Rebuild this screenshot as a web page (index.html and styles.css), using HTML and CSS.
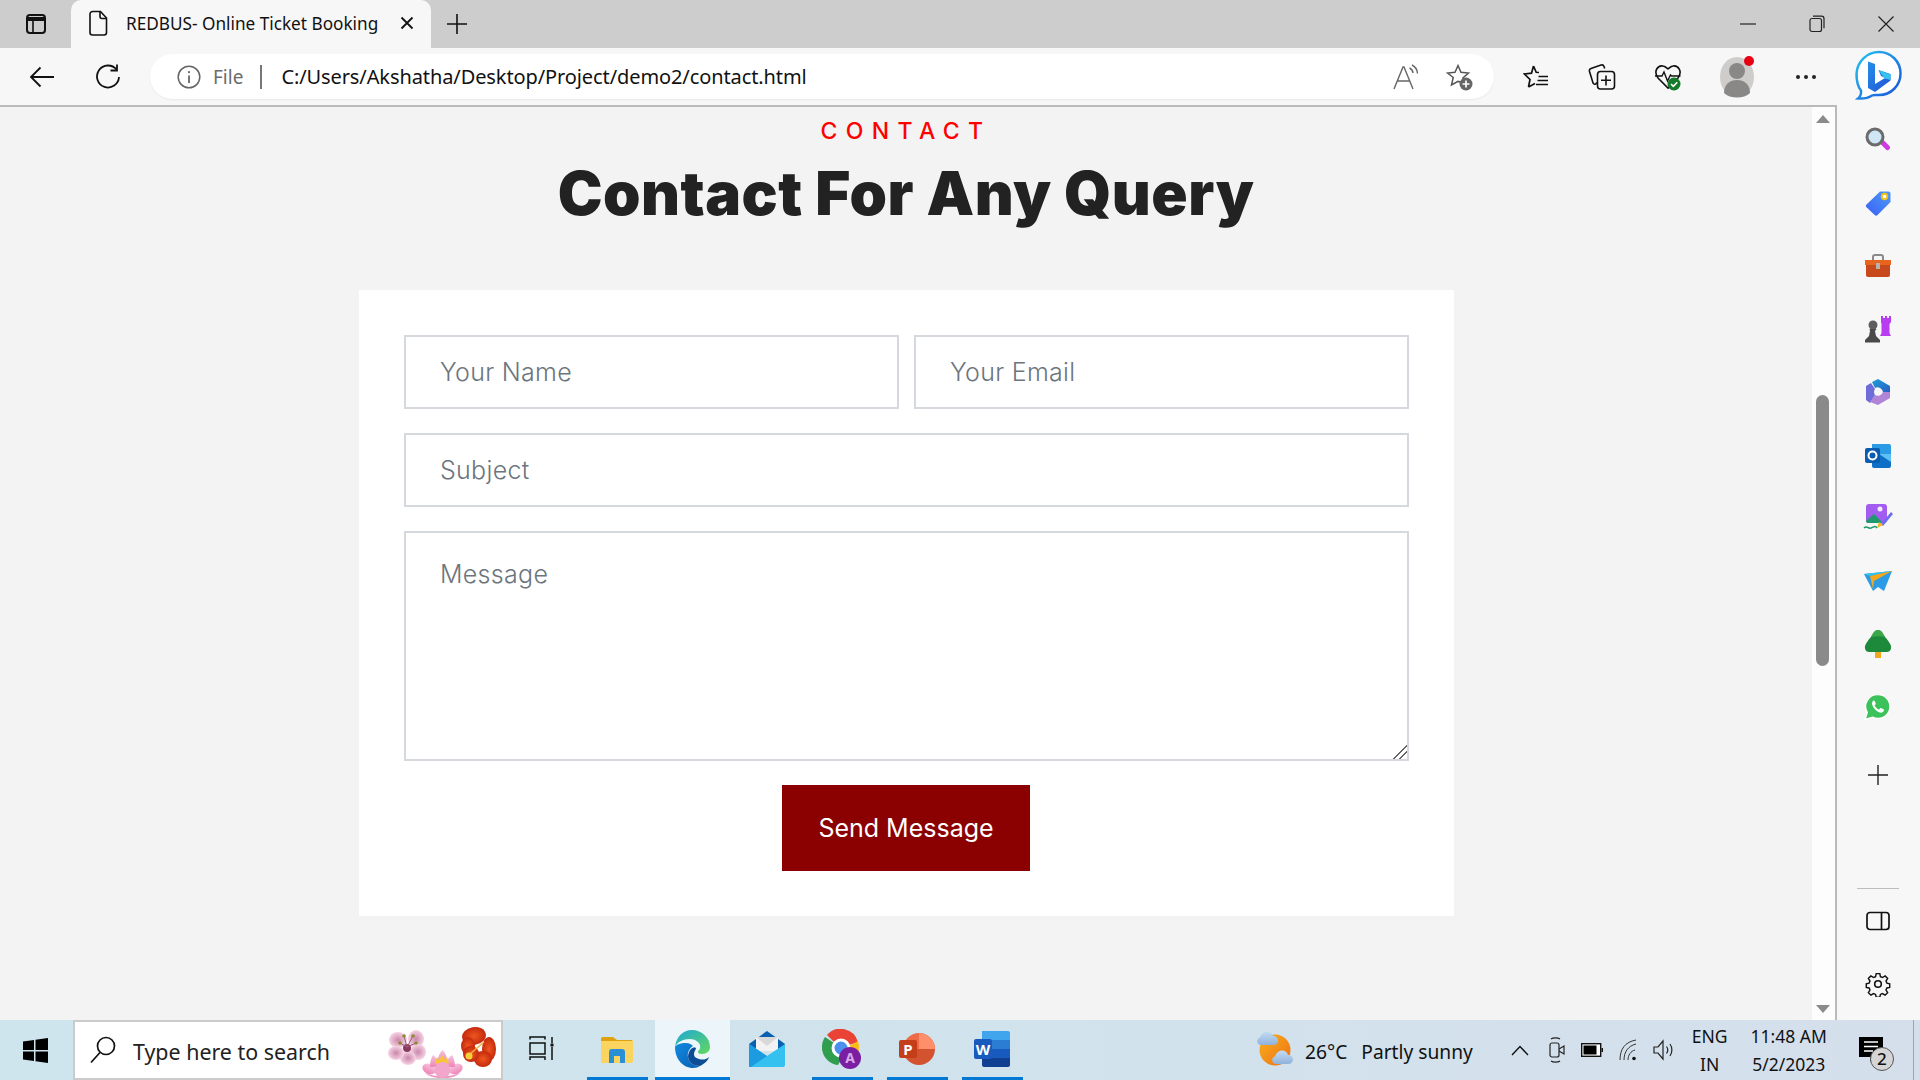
FILE: index.html
```html
<!DOCTYPE html>
<html lang="en">
<head>
    <meta charset="UTF-8">
    <meta name="viewport" content="width=device-width, initial-scale=1.0">
    <title>REDBUS- Online Ticket Booking</title>
    <link rel="stylesheet" href="styles.css">
</head>
<body>
    <div class="tabstrip">
        <div class="strip-btn">
            <svg width="24" height="24" viewBox="0 0 24 24" fill="none" stroke="#111" stroke-width="2"><rect x="3" y="3" width="18" height="18" rx="3"/><path d="M3 7h18" stroke-width="4"/><path d="M9 8v13" stroke-width="1.6"/></svg>
        </div>
        <div class="tab">
            <svg class="tab-doc" width="20" height="26" viewBox="0 0 20 26" fill="none" stroke="#111" stroke-width="1.6"><path d="M3.5 1.5h8l6 6.5v14.500a2.500 2.500 0 0 1-2.500 2.500h-11.500a2.500 2.500 0 0 1-2.500-2.500v-18.500a2.500 2.500 0 0 1 2.500-2.500z"/><path d="M11 1.500v5a2 2 0 0 0 2 2h4.500"/></svg>
            <span class="tab-title">REDBUS- Online Ticket Booking</span>
            <svg class="tab-close" width="14" height="14" viewBox="0 0 14 14" stroke="#111" stroke-width="1.800"><path d="M1.500 1.500l11 11M12.500 1.500l-11 11"/></svg>
        </div>
        <div class="strip-btn strip-plus">
            <svg width="22" height="22" viewBox="0 0 22 22" stroke="#111" stroke-width="1.600"><path d="M11 1v20M1 11h20"/></svg>
        </div>
        <div class="window-btns">
            <div class="window-btn"><svg width="16" height="16" viewBox="0 0 16 16" stroke="#222" stroke-width="1.200"><path d="M0 8h16"/></svg></div>
            <div class="window-btn"><svg width="16" height="18" viewBox="0 0 16 18" fill="none" stroke="#222" stroke-width="1.200"><rect x="1" y="3.500" width="11.500" height="13" rx="2"/><path d="M4 1.200h8.500a2.500 2.500 0 0 1 2.500 2.500v9.500"/></svg></div>
            <div class="window-btn"><svg width="16" height="16" viewBox="0 0 16 16" stroke="#222" stroke-width="1.200"><path d="M.5.500l15 15M15.500.500l-15 15"/></svg></div>
        </div>
    </div>

    <div class="toolbar">
        <div class="nav-btn">
            <svg width="26" height="22" viewBox="0 0 26 22" fill="none" stroke="#111" stroke-width="1.800"><path d="M25 11H2M11.500 1.500L2 11l9.500 9.500"/></svg>
        </div>
        <div class="nav-btn">
            <svg width="26" height="26" viewBox="0 0 26 26" fill="none" stroke="#111" stroke-width="1.800"><path d="M21.500 5.500A11 11 0 1 0 24 13"/><path d="M22 .5v6h-6.500"/></svg>
        </div>
        <div class="address">
            <svg width="24" height="24" viewBox="0 0 24 24" fill="none" stroke="#666" stroke-width="1.500"><circle cx="12" cy="12" r="10.800"/><path d="M12 10.500v7.500" stroke-width="1.800"/><circle cx="12" cy="7.200" r="1.100" fill="#666" stroke="none"/></svg>
            <span class="file-label">File</span>
            <span class="address-sep"></span>
            <span class="url">C:/Users/Akshatha/Desktop/Project/demo2/contact.html</span>
            <div class="address-end">
                <svg width="28" height="28" viewBox="0 0 28 28" fill="none" stroke="#666" stroke-width="1.400"><path d="M2 26L11 4h1l9 22M5.500 18h12.500"/><path d="M17.500 5a6 6 0 0 1 3.500 5M20 2a10 10 0 0 1 5.500 8.500"/></svg>
                <svg width="28" height="28" viewBox="0 0 28 28"><path d="M12 2.500l3 6.800 7.500.7-5.600 5 1.600 5-6.500-1.600-6.500 3.600 1.700-7.500L1.500 10l7.500-.7z" fill="none" stroke="#555" stroke-width="1.500"/><circle cx="20" cy="21" r="6.500" fill="#666"/><path d="M20 17.500v7M16.500 21h7" stroke="#fff" stroke-width="1.700"/></svg>
            </div>
        </div>
        <div class="tool-btn">
            <svg width="26" height="26" viewBox="0 0 26 26" fill="none" stroke="#111" stroke-width="1.700"><path d="M10.500 2l2.700 6.300 2.800.2M5.500 23l1.500-7.500L1.500 10l7-.8L10.500 2M5.500 23l6.500-3.500"/><path d="M15.500 12.500h9.500M14.500 16.500h10.500M13 20.500h12"/></svg>
        </div>
        <div class="tool-btn">
            <svg width="28" height="28" viewBox="0 0 28 28" fill="none" stroke="#111" stroke-width="1.600"><path d="M9 19.500l-1.300 1.500a2 2 0 0 1-2.600-.8L1.500 8.500a2.500 2.500 0 0 1 1.500-3l10-3.500c1.300-.4 2.600.3 3 1.500l.7 2"/><rect x="9.500" y="8.500" width="17" height="17.500" rx="3"/><path d="M18 12.500v10M13 17.300h10"/></svg>
        </div>
        <div class="tool-btn">
            <svg width="28" height="28" viewBox="0 0 28 28"><path d="M4 15C-1 8 4 2 9 3c3 .4 4.500 3 5 3 .5 0 2-2.600 5-3 5-.8 10 5 5 12L14 25z" fill="none" stroke="#111" stroke-width="1.600"/><path d="M1 13h7l2-4 3.500 9 3-6 1 1h9" fill="none" stroke="#111" stroke-width="1.400"/><circle cx="20" cy="21" r="6.500" fill="#157a2a"/><path d="M17 21l2.300 2.300 4-4" fill="none" stroke="#fff" stroke-width="1.600"/></svg>
        </div>
        <div class="tool-btn tool-gap">
            <svg width="36" height="42" viewBox="0 0 36 42"><ellipse cx="18" cy="21" rx="17" ry="20" fill="#cfcdcb"/><circle cx="18" cy="15" r="8" fill="#8a8886"/><path d="M5 37c0-9 6-13 13-13s13 4 13 13c-3 3-8 4.500-13 4.500S8 40 5 37z" fill="#8a8886"/></svg>
            <span class="profile-dot"></span>
        </div>
        <div class="tool-btn tool-gap">
            <svg width="22" height="6" viewBox="0 0 22 6" fill="#222"><circle cx="3" cy="3" r="2"/><circle cx="11" cy="3" r="2"/><circle cx="19" cy="3" r="2"/></svg>
        </div>
        <div class="tool-btn tool-bing">
            <svg width="48" height="54" viewBox="0 0 48 54">
                <defs>
                    <linearGradient id="bingEdge" x1="0" y1="0" x2="1" y2="1"><stop offset="0" stop-color="#27c4f0"/><stop offset="1" stop-color="#1a4fd8"/></linearGradient>
                    <linearGradient id="bingB" x1="0" y1="0" x2="1" y2="1"><stop offset="0" stop-color="#2490e8"/><stop offset="1" stop-color="#2250d6"/></linearGradient>
                </defs>
                <path d="M25 2c12 0 21.500 9.500 21.500 21.500S37 45 25 45c-3 0-5-.5-7 .5-3 2-8 3.500-14 3 2.500-2 3.500-4 3-8C4 37 2.500 30 2.500 24 3 11.500 13 2 25 2z" fill="#fff" stroke="url(#bingEdge)" stroke-width="2.500"/>
                <path d="M14 11.500l7 2.500v20l10-6-4-2-2.500-6 12 4v6.500L21 42l-7-4z" fill="url(#bingB)"/>
                <path d="M24.500 20l12 4.500v5.500l-6-1.500z" fill="#35c3ee"/>
            </svg>
        </div>
    </div>

    <div class="browser-body">
        <main class="page">
            <h5 class="eyebrow">CONTACT</h5>
            <h1 class="page-title">Contact For Any Query</h1>
            <form class="contact-card">
                <div class="form-row">
                    <input class="field" type="text" placeholder="Your Name">
                    <input class="field" type="email" placeholder="Your Email">
                </div>
                <input class="field" type="text" placeholder="Subject">
                <textarea class="field field-message" placeholder="Message"></textarea>
                <button class="send-btn" type="button">Send Message</button>
            </form>
        </main>

        <div class="scrollbar">
            <span class="arrow arrow-up"></span>
            <span class="thumb"></span>
            <span class="arrow arrow-down"></span>
        </div>

        <aside class="sidebar">
            <div class="side-btn">
                <svg width="26" height="26" viewBox="0 0 26 26"><rect x="15" y="15.500" width="11" height="5" rx="2.500" transform="rotate(45 20 18)" fill="#cf3ae0"/><circle cx="10" cy="10" r="8" fill="#cfe6f5" stroke="#6b6b6b" stroke-width="3"/></svg>
            </div>
            <div class="side-btn">
                <svg width="26" height="26" viewBox="0 0 26 26"><defs><linearGradient id="tagFill" x1="0" y1="1" x2="1" y2="0"><stop offset="0" stop-color="#3a60f5"/><stop offset="1" stop-color="#4d9bf7"/></linearGradient></defs><path d="M1.500 14.500L15 1.500h8.500a2 2 0 0 1 2 2V12L12.500 25a2 2 0 0 1-2.800 0l-8.200-7.700a2 2 0 0 1 0-2.800z" fill="url(#tagFill)"/><circle cx="19.500" cy="6.500" r="2.700" fill="#fff" stroke="#f2c21a" stroke-width="2"/></svg>
            </div>
            <div class="side-btn">
                <svg width="28" height="24" viewBox="0 0 28 24"><path d="M9 6V3a2 2 0 0 1 2-2h6a2 2 0 0 1 2 2v3" fill="none" stroke="#8a8a8a" stroke-width="2"/><path d="M1 6h26v5H1z" fill="#e8641f"/><path d="M2 11h24v10a2 2 0 0 1-2 2H4a2 2 0 0 1-2-2z" fill="#c64a1b"/><rect x="12" y="9" width="4" height="6" fill="#b9b1ab"/></svg>
            </div>
            <div class="side-btn">
                <svg width="28" height="28" viewBox="0 0 28 28"><path d="M17 1h2v2h2V1h2v2h2V1h2v6l-1.500 2v9l1.500 3h-11l1.500-3V9L17 7z" fill="#b83cf0"/><circle cx="9" cy="10" r="4.500" fill="#5e5e5e"/><path d="M5.500 14h7l-1.500 2 1 5 4 4v2.500H1V25l4-4 1-5z" fill="#4a4a4a"/></svg>
            </div>
            <div class="side-btn">
                <svg width="26" height="28" viewBox="0 0 26 28"><defs><linearGradient id="msBlue" x1="0" y1="0" x2="1" y2="1"><stop offset="0" stop-color="#1aa0d8"/><stop offset="1" stop-color="#2d5ec6"/></linearGradient></defs><path d="M13 1l12 7v6h-7a5.500 5.500 0 0 0-8-4L7 4z" fill="url(#msBlue)"/><path d="M1 8l5-3 4 6a5.500 5.500 0 0 0 0 6l-5 8-4-3z" fill="#6d6cd8"/><path d="M25 14v6l-12 7-8-3 5-7a5.500 5.500 0 0 0 8-3z" fill="#b084d6"/></svg>
            </div>
            <div class="side-btn">
                <svg width="26" height="26" viewBox="0 0 26 26"><path d="M7 2h17a2 2 0 0 1 2 2v8H7z" fill="#2b9be6"/><path d="M7 12l19 0v12a2 2 0 0 1-2 2H9a2 2 0 0 1-2-2z" fill="#0f6fc6"/><path d="M14 12l12 8v-8z" fill="#5cc0f2"/><rect x="0" y="6" width="15" height="15" rx="2" fill="#0a5cb0"/><circle cx="7.500" cy="13.500" r="4" fill="none" stroke="#fff" stroke-width="2"/></svg>
            </div>
            <div class="side-btn">
                <svg width="30" height="28" viewBox="0 0 30 28"><rect x="3" y="0" width="21" height="19" rx="3" fill="#a35cf0"/><circle cx="17" cy="5" r="2.500" fill="#f4e9ff"/><path d="M3 17l8-7 7 7v2H5a2 2 0 0 1-2-2z" fill="#1f9a6c"/><path d="M18 20L28 8l2 2-10 12z" fill="#6f6cf0"/><path d="M14 24l2-6 4 3z" fill="#f2b51c"/><path d="M1 24c3-3 4 1 7 0s4-3 6 0" fill="none" stroke="#1c9a6a" stroke-width="1.500"/></svg>
            </div>
            <div class="side-btn">
                <svg width="28" height="20" viewBox="0 0 28 20"><path d="M0 3L28 0 20 20l-6-4-5 4z" fill="#2b9be6"/><path d="M0 3l6 2 22-5z" fill="#2ec4f0"/><path d="M6 5l22-5L10 10l-1 8z" fill="#f2a71c"/></svg>
            </div>
            <div class="side-btn">
                <svg width="28" height="28" viewBox="0 0 28 28"><rect x="11" y="20" width="6" height="8" fill="#f2a71c"/><path d="M14 0c4 0 5 4 7 7 2 2 5 6 6 9 .5 3-1 6-4 6H5c-3 0-4.500-3-4-6 1-3 4-7 6-9 2-3 3-7 7-7z" fill="#1c8a3a"/><path d="M14 0c4 0 5 4 7 7-4-1-10-1-14 0 2-3 3-7 7-7z" fill="#3aa84a"/></svg>
            </div>
            <div class="side-btn">
                <svg width="28" height="28" viewBox="0 0 28 28"><path d="M14 1.500a12 12 0 0 1 0 24c-2 0-4-.5-5.500-1.300L1 26.500l2.200-7A12 12 0 0 1 14 1.500z" fill="#3cc25a" stroke="#fff" stroke-width="1.500"/><path d="M9.500 7.500c-1.500 1-2 3-.8 5.500 1.500 3 4 5.500 7 6.500 2 .6 3.800-.5 4.300-2 .1-.6 0-1-.5-1.200l-2.500-1.200c-.4-.2-.8 0-1 .3l-1 1.200c-1.800-.7-3.500-2.400-4.400-4.200l.9-1c.3-.4.300-.7.200-1L10.700 8c-.2-.6-.7-.7-1.200-.5z" fill="#fff"/></svg>
            </div>
            <div class="side-btn side-plus">
                <svg width="20" height="20" viewBox="0 0 20 20" stroke="#222" stroke-width="1.400"><path d="M10 0v20M0 10h20"/></svg>
            </div>
            <div class="side-bottom">
                <span class="side-divider"></span>
                <div class="side-btn">
                    <svg width="24" height="20" viewBox="0 0 24 20" fill="none" stroke="#111" stroke-width="1.700"><rect x="1" y="1.500" width="22" height="17" rx="3"/><path d="M15.500 1.500v17"/></svg>
                </div>
                <div class="side-btn">
                    <svg width="26" height="26" viewBox="0 0 26 26" fill="none" stroke="#111" stroke-width="1.600"><path d="M11 1.500h4l.7 3.300 2.300 1 2.900-1.800 2.800 2.800-1.800 2.900 1 2.300 3.100.7v4l-3.100.7-1 2.300 1.800 2.900-2.800 2.800-2.900-1.800-2.300 1-.7 3.100h-4l-.7-3.100-2.300-1-2.900 1.800-2.800-2.800 1.800-2.900-1-2.300-3.100-.7v-4l3.100-.7 1-2.300-1.800-2.900 2.800-2.800 2.900 1.800 2.300-1z" transform="translate(1.300 1.300) scale(.9)"/><circle cx="13" cy="13" r="3.300"/></svg>
                </div>
            </div>
        </aside>
    </div>

    <footer class="taskbar">
        <div class="start-btn">
            <svg width="25" height="25" viewBox="0 0 25 25" fill="#000"><path d="M0 3.500L11 2v10H0zM12.500 1.800L25 0v12H12.500zM0 13.500h11v9.500L0 21.500zM12.500 13.500H25V25l-12.500-1.800z"/></svg>
        </div>
        <div class="search-box">
            <svg width="26" height="28" viewBox="0 0 26 28" fill="none" stroke="#111" stroke-width="1.700"><circle cx="16" cy="10" r="8.500"/><path d="M10 16.500L1 26.500"/></svg>
            <span class="search-text">Type here to search</span>
            <svg class="search-flowers" width="110" height="58" viewBox="0 0 110 58">
                <defs>
                    <radialGradient id="blossom"><stop offset="0" stop-color="#c987ab"/><stop offset="1" stop-color="#f6d3e4"/></radialGradient>
                    <linearGradient id="lotus" x1="0" y1="0" x2="0" y2="1"><stop offset="0" stop-color="#f6c4dc"/><stop offset="1" stop-color="#ee84b8"/></linearGradient>
                    <radialGradient id="hibiscus"><stop offset="0" stop-color="#f0561e"/><stop offset="1" stop-color="#c42a0e"/></radialGradient>
                </defs>
                <g fill="url(#blossom)">
                    <ellipse cx="11" cy="19" rx="9" ry="8"/><ellipse cx="29" cy="18" rx="8" ry="9"/><ellipse cx="31" cy="31" rx="8" ry="8"/><ellipse cx="21" cy="37" rx="8" ry="7"/><ellipse cx="9" cy="32" rx="8" ry="7"/>
                </g>
                <circle cx="20" cy="27" r="4" fill="#8c3a5c"/>
                <path d="M20 26L17 15M20 26l6-11M20 26l9-4M20 26l-7-4" stroke="#9c5a7c" stroke-width="1"/>
                <g fill="#8f8a32"><circle cx="17" cy="15" r="1.800"/><circle cx="26" cy="15" r="1.800"/><circle cx="29" cy="22" r="1.800"/><circle cx="13" cy="22" r="1.800"/></g>
                <g fill="url(#lotus)">
                    <ellipse cx="42" cy="48" rx="7" ry="5" transform="rotate(25 42 48)"/><ellipse cx="69" cy="48" rx="7" ry="5" transform="rotate(-25 69 48)"/>
                    <path d="M43 46c0-7 2-10 3-12 3 2 6 6 6 12z"/><path d="M68 46c0-7-2-10-3-12-3 2-6 6-6 12z"/><path d="M55.500 29c4 4 5 9 5 14h-10c0-5 1-10 5-14z"/>
                    <path d="M37 50c6 7 31 7 37 0-3 6-10 7-18 7s-16-1-19-7z"/>
                </g>
                <path d="M48 42l2-6 2 3 3-5 3 5 2-3 2 6-7 3z" fill="#f7c53a"/>
                <ellipse cx="55.500" cy="49" rx="8" ry="8" fill="#f3a6cb"/>
                <g fill="url(#hibiscus)">
                    <ellipse cx="87" cy="15" rx="12" ry="9" transform="rotate(-10 87 15)"/><ellipse cx="81" cy="25" rx="7" ry="9"/><ellipse cx="102" cy="28" rx="7" ry="12"/><ellipse cx="96" cy="38" rx="9" ry="8"/><ellipse cx="84" cy="33" rx="8" ry="8"/>
                </g>
                <path d="M97 21L83 33" stroke="#f2b03a" stroke-width="1.500"/>
                <circle cx="82" cy="35" r="3.500" fill="#f4d13a"/>
            </svg>
        </div>
        <div class="task-slot task-view">
            <svg width="25" height="25" viewBox="0 0 25 25" fill="none" stroke="#111" stroke-width="1.500"><rect x="1" y="7" width="15" height="11"/><path d="M1 3.500V1h15v2.500M1 24v-3h15v3M23 1v6M23 11v13"/><rect x="21.500" y="7.500" width="3" height="3" fill="#111" stroke="none"/></svg>
        </div>
        <div class="task-slot is-open">
            <svg width="32" height="28" viewBox="0 0 32 28"><path d="M0 4a2 2 0 0 1 2-2h10l4 3h14a2 2 0 0 1 2 2v3H0z" fill="#e0a10e"/><path d="M0 6h32v20a2 2 0 0 1-2 2H2a2 2 0 0 1-2-2z" fill="#fbd35f"/><path d="M8 28V17a3 3 0 0 1 3-3h10a3 3 0 0 1 3 3v11h-5v-7h-6v7z" fill="#2b8fd6"/></svg>
        </div>
        <div class="task-slot is-open is-active">
            <svg width="36" height="38" viewBox="0 0 36 38"><defs><linearGradient id="edgeTop" x1="0" y1="0" x2="1" y2="1"><stop offset="0" stop-color="#1ea7d8"/><stop offset="1" stop-color="#62d85c"/></linearGradient><linearGradient id="edgeLow" x1="0" y1="0" x2="1" y2="1"><stop offset="0" stop-color="#0f8ae0"/><stop offset="1" stop-color="#0c5fb0"/></linearGradient></defs><path d="M1 17C2 7 9 0 18 0c10 0 18 8 18 17 0 4-3 7-8 7-3 0-4-1-4-2 0-2 3-2 2-7-1-3-5-6-10-6-7 0-13 3-15 8z" fill="url(#edgeTop)"/><path d="M1 17c0 12 8 21 18 21 3 0 5-1 7-2-6 0-11-3-12-9-1-5 2-9 5-11-2-2-4-3-7-3-6 0-10 2-11 4z" fill="url(#edgeLow)"/><path d="M14 27c1 6 6 9 12 9 4-2 8-5 9-9-3 3-7 3-10 2-4-1-5-3-5-5 0-3 2-4 2-6-2-1-4 0-5 1-2 2-3 5-3 8z" fill="#0a4d96"/></svg>
        </div>
        <div class="task-slot">
            <svg width="36" height="36" viewBox="0 0 36 36"><path d="M0 13L18 0l18 13v5H0z" fill="#0b5fb0"/><rect x="7" y="6" width="22" height="14" fill="#f2f2f2"/><path d="M0 13l18 12 18-12v21a2 2 0 0 1-2 2H2a2 2 0 0 1-2-2z" fill="#34c1f0"/><path d="M0 36V13l18 12-16 11z" fill="#1d9be0"/><path d="M7 6h22l-11 9z" fill="#d9d9d9"/></svg>
        </div>
        <div class="task-slot is-open">
            <svg width="40" height="40" viewBox="0 0 40 40"><path d="M18 18L5 5a18 18 0 0 1 31 7z" fill="#ea4335" transform="translate(0 1)"/><path d="M3 8a18 18 0 0 0 13 28l8-14z" fill="#2f9e4f"/><path d="M36 12a18 18 0 0 1-4 18L20 36l2-16z" fill="#f9bc15"/><circle cx="19" cy="19" r="8" fill="#4a90f0" stroke="#fff" stroke-width="3"/><circle cx="28" cy="29" r="11" fill="#7a1fa2"/><text class="chrome-badge" x="28" y="34" text-anchor="middle">A</text></svg>
        </div>
        <div class="task-slot is-open">
            <svg width="36" height="36" viewBox="0 0 36 36"><path d="M20 2a16 16 0 0 1 0 32 16 16 0 0 1-16-16h16z" fill="#d35230"/><path d="M20 2v16h16A16 16 0 0 0 20 2z" fill="#ff8f6b"/><path d="M4 18A16 16 0 0 1 20 2v16z" fill="#ed6c47"/><rect x="0" y="9" width="18" height="18" rx="2" fill="#c43e1c"/><text class="office-letter" x="9" y="23.500" text-anchor="middle">P</text></svg>
        </div>
        <div class="task-slot is-open">
            <svg width="36" height="36" viewBox="0 0 36 36"><path d="M8 0h26a2 2 0 0 1 2 2v7H8z" fill="#41a5ee"/><rect x="8" y="9" width="28" height="9" fill="#2b7cd3"/><rect x="8" y="18" width="28" height="9" fill="#185abd"/><path d="M8 27h28v7a2 2 0 0 1-2 2H10a2 2 0 0 1-2-2z" fill="#103f91"/><rect x="0" y="8" width="18" height="20" rx="2" fill="#185abd"/><text class="office-letter" x="9" y="23.500" text-anchor="middle">W</text></svg>
        </div>

        <div class="tray">
            <svg class="tray-weather" width="38" height="38" viewBox="0 0 38 38">
                <defs>
                    <linearGradient id="sunFill" x1="0" y1="0" x2="1" y2="1"><stop offset="0" stop-color="#f8b21c"/><stop offset="1" stop-color="#ee6f16"/></linearGradient>
                    <linearGradient id="cloudFill" x1="0" y1="0" x2="0" y2="1"><stop offset="0" stop-color="#c4dcf2"/><stop offset="1" stop-color="#8fb2dc"/></linearGradient>
                </defs>
                <circle cx="19" cy="19" r="15.500" fill="url(#sunFill)"/>
                <path d="M5 14a4 4 0 0 1-1-7.800C5 3 8 .5 11 .5c3 0 5.500 2 6 4.500 3 0 5 2 5 4.500S20 14 17 14z" fill="url(#cloudFill)"/>
                <path d="M20 33a4 4 0 0 1-1-7.800c1-3.200 4-5.700 7-5.700 3 0 5.500 2 6 4.500 3 0 5 2 5 4.500S35 33 32 33z" fill="url(#cloudFill)"/>
            </svg>
            <span class="tray-temp">26°C</span>
            <span class="tray-weather-text">Partly sunny</span>
            <svg class="tray-icon tray-chevron" width="18" height="11" viewBox="0 0 18 11" fill="none" stroke="#111" stroke-width="1.400"><path d="M1 10l8-8.500L17 10"/></svg>
            <svg class="tray-icon tray-meet" width="16" height="28" viewBox="0 0 16 28" fill="none" stroke="#222" stroke-width="1.200"><rect x="1" y="7" width="9" height="14" rx="2"/><path d="M10 13l5-3v8l-5-3M2 3c2-1.500 7-1.500 9 0M2 25c2 1.500 7 1.500 9 0"/></svg>
            <svg class="tray-icon" width="22" height="14" viewBox="0 0 22 14"><rect x=".7" y=".7" width="19" height="12.600" fill="#fff" stroke="#111" stroke-width="1.400"/><rect x="2.500" y="2.500" width="13" height="9" fill="#000"/><rect x="20.500" y="5" width="1.500" height="4" fill="#111"/></svg>
            <svg class="tray-icon" width="18" height="22" viewBox="0 0 18 22" fill="none" stroke="#333" stroke-width="1"><path d="M1 21C1 10 6 3 17 1M5 21C5 13 9 7 17 5M9 21c0-5 3-9 7-10"/><circle cx="15" cy="19.500" r="1.800" fill="#111" stroke="none"/></svg>
            <svg class="tray-icon" width="22" height="22" viewBox="0 0 22 22" fill="none" stroke="#222" stroke-width="1.200"><path d="M1 8h4l5-6v18l-5-6H1zM13.500 7.500c1.500 2 1.500 5 0 7M17 5c2.500 3.500 2.500 8.500 0 12"/></svg>
            <div class="tray-stack tray-lang"><span>ENG</span><span>IN</span></div>
            <div class="tray-stack tray-clock"><span>11:48 AM</span><span>5/2/2023</span></div>
            <div class="notify">
                <svg width="24" height="26" viewBox="0 0 24 26"><path d="M0 0h24v20H14l-3 5v-5H0z" fill="#000"/><path d="M5 5h14M5 9.500h14M5 14h9" stroke="#fff" stroke-width="1.300"/></svg>
                <span class="notify-count">2</span>
            </div>
            <span class="show-desktop"></span>
        </div>
    </footer>
</body>
</html>
```

FILE: styles.css
```css
* {
    box-sizing: border-box;
}
html,
body {
    height: 100%;
}
body {
    margin: 0;
    display: flex;
    flex-direction: column;
    overflow: hidden;
    font-family: 'Noto Sans', 'Open Sans', sans-serif;
    color: #111;
    background-color: #f7f7f7;
}
svg {
    display: block;
    flex-shrink: 0;
}

/* browser tab row */
.tabstrip {
    height: 48px;
    display: flex;
    align-items: flex-end;
    background-color: #cdcdcd;
}
.strip-btn {
    width: 71px;
    height: 48px;
    display: flex;
    align-items: center;
    justify-content: center;
}
.strip-plus {
    width: 52px;
}
.tab {
    width: 360px;
    height: 48px;
    display: flex;
    align-items: center;
    padding: 0 0 2px 18px;
    background-color: #f7f7f7;
    border-radius: 10px 10px 0 0;
}
.tab-title {
    margin-left: 17px;
    width: 251px;
    font-size: 17.2px;
    white-space: nowrap;
}
.tab-close {
    margin-left: 23px;
}
.window-btns {
    margin-left: auto;
    display: flex;
}
.window-btn {
    width: 69px;
    height: 48px;
    display: flex;
    align-items: center;
    justify-content: center;
}

/* address bar */
.toolbar {
    height: 57px;
    display: flex;
    align-items: center;
    padding-left: 15px;
    background-color: #f7f7f7;
}
.nav-btn {
    width: 54px;
    height: 44px;
    display: flex;
    align-items: center;
    justify-content: center;
}
.nav-btn + .nav-btn {
    margin-left: 12px;
}
.address {
    width: 1344px;
    height: 45px;
    margin: 0 9px 0 15px;
    padding: 0 20px 0 27px;
    display: flex;
    align-items: center;
    background-color: #fff;
    border-radius: 23px;
    box-shadow: 0 1px 2px rgba(0,0,0,0.06);
}
.file-label {
    margin-left: 12px;
    font-size: 19px;
    color: #6b6b6b;
}
.address-sep {
    width: 2px;
    height: 24px;
    margin: 0 19px 0 17px;
    background-color: #777;
}
.url {
    font-size: 20px;
    white-space: nowrap;
    letter-spacing: -0.1px;
}
.address-end {
    margin-left: auto;
    display: flex;
    gap: 26px;
}
.tool-btn {
    position: relative;
    width: 66px;
    height: 56px;
    display: flex;
    align-items: center;
    justify-content: center;
}
.tool-gap {
    margin-left: 3px;
}
.tool-bing {
    margin-left: 6px;
}
.profile-dot {
    position: absolute;
    top: 7px;
    right: 16px;
    width: 10px;
    height: 10px;
    border-radius: 50%;
    background-color: #e60012;
}

/* page + scrollbar + sidebar */
.browser-body {
    flex: 1;
    min-height: 0;
    display: flex;
}
.page {
    width: 1812px;
    padding-top: 10px;
    border-top: 2px solid #bababa;
    background-color: #f3f3f3;
    font-family: 'Inter', 'Liberation Sans', sans-serif;
}
.eyebrow {
    margin: 0;
    text-align: center;
    font-size: 23px;
    font-weight: 500;
    line-height: 28px;
    letter-spacing: 8.4px;
    color: #ff0000;
}
.page-title {
    margin: 10px 0 0;
    text-align: center;
    font-size: 60px;
    font-weight: 900;
    line-height: 76px;
    letter-spacing: 0.5px;
    color: #222;
}
.contact-card {
    width: 1095px;
    margin: 59px 0 0 359px;
    padding: 45px;
    display: flex;
    flex-direction: column;
    gap: 24px;
    background-color: #fff;
}
.form-row {
    display: flex;
    gap: 15px;
}
.field {
    display: block;
    width: 100%;
    height: 74px;
    padding: 0 34px;
    border: 2px solid #d5d9de;
    border-radius: 0;
    font-family: inherit;
    font-size: 25px;
    font-weight: 300;
    letter-spacing: 0.3px;
    color: #333;
    background-color: #fff;
}
.field::placeholder {
    color: #6c757d;
    opacity: 1;
}
.field-message {
    height: 230px;
    padding-top: 23px;
    line-height: 36px;
}
.field-message::-webkit-resizer {
    background: linear-gradient(135deg, transparent 50%, #666 50%, #666 57%, transparent 57%, transparent 72%, #666 72%, #666 79%, transparent 79%);
}
.send-btn {
    align-self: center;
    width: 248px;
    height: 86px;
    margin-right: 1px;
    border: none;
    font-family: inherit;
    font-size: 25px;
    font-weight: 400;
    color: #fff;
    background-color: #8b0000;
}
.scrollbar {
    width: 25px;
    display: flex;
    flex-direction: column;
    align-items: center;
    padding-right: 2px;
    border-top: 2px solid #bababa;
    border-right: 2px solid #bababa;
    background-color: #fdfdfd;
}
.arrow {
    width: 0;
    height: 0;
    border-left: 7px solid transparent;
    border-right: 7px solid transparent;
}
.arrow-up {
    margin-top: 8px;
    border-bottom: 8px solid #8a8a8a;
}
.arrow-down {
    margin-top: auto;
    margin-bottom: 7px;
    border-top: 8px solid #8a8a8a;
}
.thumb {
    width: 13px;
    height: 271px;
    margin-top: 272px;
    border-radius: 7px;
    background-color: #8a8a8a;
}
.sidebar {
    flex: 1;
    display: flex;
    flex-direction: column;
    padding: 3px 2px 5px 0;
}
.side-btn {
    height: 63px;
    display: flex;
    align-items: center;
    justify-content: center;
}
.side-plus {
    margin-top: 5px;
}
.side-bottom {
    margin-top: auto;
}
.side-divider {
    display: block;
    width: 42px;
    height: 1px;
    margin: 0 auto;
    background-color: #bdbdbd;
}

/* windows taskbar */
.taskbar {
    height: 60px;
    display: flex;
    align-items: stretch;
    background: linear-gradient(90deg, #cfe5ee, #d0e3ec 45%, #d5dfec);
}
.start-btn {
    width: 73px;
    display: flex;
    align-items: center;
    justify-content: center;
    padding-right: 2px;
}
.search-box {
    position: relative;
    width: 430px;
    display: flex;
    align-items: center;
    padding-left: 15px;
    border: 2px solid #cbcbcb;
    background-color: #fff;
}
.search-text {
    margin: 3px 0 0 17px;
    font-size: 21.400px;
    color: #222;
}
.search-flowers {
    position: absolute;
    right: 4px;
    top: -1px;
}
.task-slot {
    width: 75px;
    display: flex;
    align-items: center;
    justify-content: center;
    padding-right: 1px;
    border-bottom: 3px solid transparent;
    background-clip: padding-box;
}
.task-view {
    width: 77px;
}
.is-open {
    position: relative;
}
.is-open::after {
    content: "";
    position: absolute;
    left: 7px;
    right: 7px;
    bottom: -3px;
    height: 3px;
    background-color: #0078d4;
}
.is-active {
    background-color: #ecf5f9;
    border-bottom-color: #0078d4;
}
.is-active::after {
    left: 1px;
    right: 1px;
}
.chrome-badge {
    font-family: 'Noto Sans', sans-serif;
    font-size: 14px;
    font-weight: 700;
    fill: #d9a8e8;
}
.office-letter {
    font-family: 'Noto Sans', sans-serif;
    font-size: 15px;
    font-weight: 700;
    fill: #fff;
}
.tray {
    flex: 1;
    display: flex;
    align-items: center;
    padding-left: 226px;
    color: #111;
}
.tray-temp {
    margin: 2px 0 0 11px;
    font-size: 19.200px;
}
.tray-weather-text {
    margin: 2px 0 0 14px;
    font-size: 19.200px;
    white-space: nowrap;
}
.tray-chevron {
    margin-left: 38px;
}
.tray-icon + .tray-icon {
    margin-left: 16px;
}
.tray-icon + .tray-meet {
    margin-left: 20px;
}
.tray-stack {
    display: flex;
    flex-direction: column;
    align-items: center;
    gap: 6px;
    font-size: 17.500px;
    line-height: 22px;
}
.tray-lang {
    margin-left: 17px;
}
.tray-clock {
    margin-left: 23px;
}
.notify {
    position: relative;
    margin-left: 32px;
}
.notify-count {
    position: absolute;
    left: 11px;
    top: 10px;
    width: 24px;
    height: 24px;
    border-radius: 50%;
    text-align: center;
    font-size: 17px;
    font-weight: 500;
    line-height: 22px;
    border: 1px solid #555;
    background-color: #d5d5d5;
}
.show-desktop {
    width: 1px;
    height: 60px;
    margin-left: auto;
    margin-right: 6px;
    background-color: #9aa5b1;
}
```
